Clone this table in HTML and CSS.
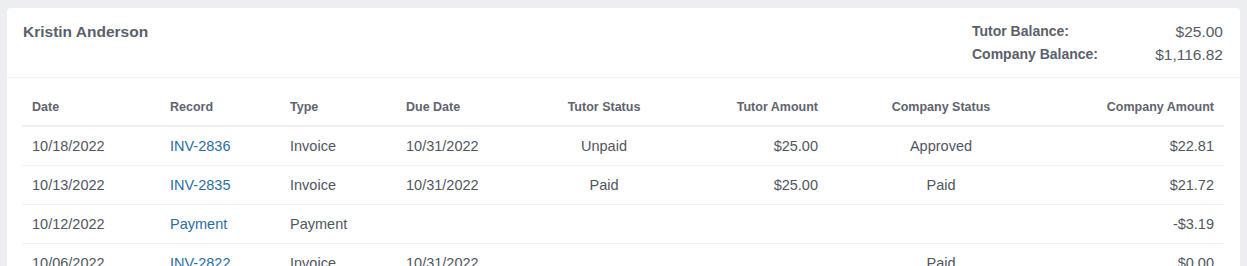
FILE: index.html
```html
<!DOCTYPE html>
<html>
<head>
<meta charset="utf-8">
<link rel="stylesheet" href="styles.css">
</head>
<body>
<div class="card">
  <div class="card-header">
    <div class="name">Kristin Anderson</div>
    <div class="balances">
      <div class="bal-label">Tutor Balance:</div>
      <div class="bal-value">$25.00</div>
      <div class="bal-label">Company Balance:</div>
      <div class="bal-value">$1,116.82</div>
    </div>
  </div>
  <div class="card-body">
    <table class="ledger">
      <colgroup>
        <col class="c-date"><col class="c-record"><col class="c-type"><col class="c-due">
        <col class="c-tstatus"><col class="c-tamount"><col class="c-cstatus"><col class="c-camount">
      </colgroup>
      <thead>
        <tr>
          <th>Date</th><th>Record</th><th>Type</th><th>Due Date</th>
          <th class="center">Tutor Status</th><th class="right">Tutor Amount</th>
          <th class="center">Company Status</th><th class="right">Company Amount</th>
        </tr>
      </thead>
      <tbody>
        <tr>
          <td>10/18/2022</td><td><a class="link" href="#">INV-2836</a></td><td>Invoice</td><td>10/31/2022</td>
          <td class="center">Unpaid</td><td class="right">$25.00</td><td class="center">Approved</td><td class="right">$22.81</td>
        </tr>
        <tr>
          <td>10/13/2022</td><td><a class="link" href="#">INV-2835</a></td><td>Invoice</td><td>10/31/2022</td>
          <td class="center">Paid</td><td class="right">$25.00</td><td class="center">Paid</td><td class="right">$21.72</td>
        </tr>
        <tr>
          <td>10/12/2022</td><td><a class="link" href="#">Payment</a></td><td>Payment</td><td></td>
          <td class="center"></td><td class="right"></td><td class="center"></td><td class="right">-$3.19</td>
        </tr>
        <tr>
          <td>10/06/2022</td><td><a class="link" href="#">INV-2822</a></td><td>Invoice</td><td>10/31/2022</td>
          <td class="center"></td><td class="right"></td><td class="center">Paid</td><td class="right">$0.00</td>
        </tr>
      </tbody>
    </table>
  </div>
</div>
</body>
</html>
```

FILE: styles.css
```css
html, body {
  margin: 0;
  padding: 0;
}
body {
  background: #eceef2;
  padding: 8px 7px 0 7px;
  font-family: "Liberation Sans", Arial, sans-serif;
  color: #51565f;
}
.card {
  background: #ffffff;
  border-radius: 4px 4px 0 0;
}
.card-header {
  display: flex;
  justify-content: space-between;
  align-items: flex-start;
  padding: 12px 17px 11px 16px;
  border-bottom: 1px solid #eff0f2;
}
.name {
  font-size: 15.5px;
  font-weight: 700;
  line-height: 23px;
  color: #5b5f6c;
}
.balances {
  display: grid;
  grid-template-columns: 150px 101px;
  line-height: 23px;
}
.bal-label {
  font-size: 14px;
  font-weight: 700;
  color: #5b5f6c;
}
.bal-value {
  font-size: 15.5px;
  text-align: right;
  color: #555a64;
}
.card-body {
  padding: 11px 16px 0 15px;
}
.ledger {
  width: 1202px;
  table-layout: fixed;
  border-collapse: collapse;
}
.c-date { width: 138px; }
.c-record { width: 120px; }
.c-type { width: 116px; }
.c-due { width: 140px; }
.c-tstatus { width: 136px; }
.c-tamount { width: 156px; }
.c-cstatus { width: 226px; }
.c-camount { width: 170px; }
.ledger th {
  font-size: 12.5px;
  font-weight: 700;
  color: #5f6371;
  text-align: left;
  line-height: 18px;
  padding: 9px 10px;
  border-bottom: 2px solid #eeeff2;
}
.ledger td {
  font-size: 14.5px;
  line-height: 20px;
  padding: 9px 10px;
  border-top: 1px solid #eff0f2;
  white-space: nowrap;
}
.ledger thead + tbody tr:first-child td {
  border-top: none;
}
.ledger .center { text-align: center; }
.ledger .right { text-align: right; }
.link {
  color: #2b6d9f;
  text-decoration: none;
}
```
